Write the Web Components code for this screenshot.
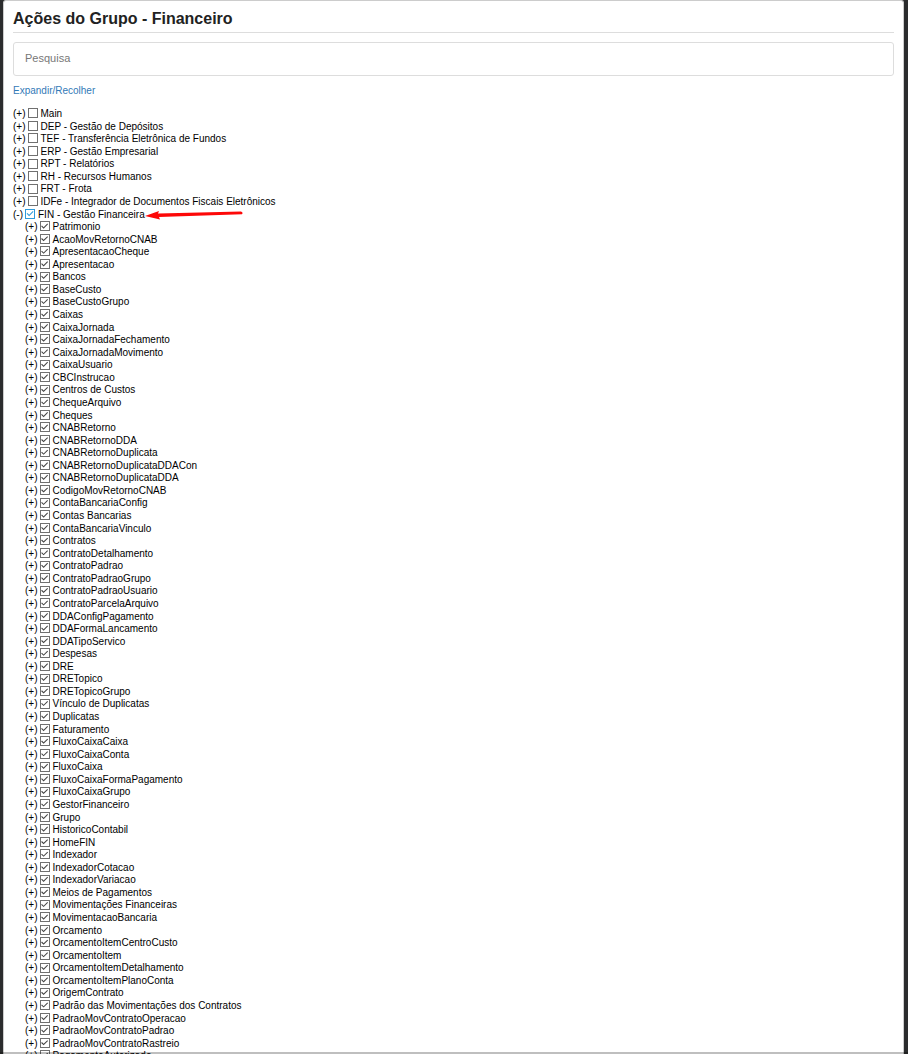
<!DOCTYPE html>
<html lang="pt-BR">
<head>
<meta charset="utf-8">
<title>Ações do Grupo - Financeiro</title>
<style>
  html {
    height: 100%;
  }

  body {
    margin: 0;
    height: 100%;
    overflow: hidden;
    background: #2b2c2d;
    font-family: "Liberation Sans", Arial, sans-serif;
  }
</style>
</head>
<body>
<painel-acoes titulo="Ações do Grupo - Financeiro">
  <campo-pesquisa texto="Pesquisa"></campo-pesquisa>
  <arvore-acoes></arvore-acoes>
</painel-acoes>

<script>
const MODULOS = [
  "Main",
  "DEP - Gestão de Depósitos",
  "TEF - Transferência Eletrônica de Fundos",
  "ERP - Gestão Empresarial",
  "RPT - Relatórios",
  "RH - Recursos Humanos",
  "FRT - Frota",
  "IDFe - Integrador de Documentos Fiscais Eletrônicos",
];

const ACOES_FIN = [
  "Patrimonio",
  "AcaoMovRetornoCNAB",
  "ApresentacaoCheque",
  "Apresentacao",
  "Bancos",
  "BaseCusto",
  "BaseCustoGrupo",
  "Caixas",
  "CaixaJornada",
  "CaixaJornadaFechamento",
  "CaixaJornadaMovimento",
  "CaixaUsuario",
  "CBCInstrucao",
  "Centros de Custos",
  "ChequeArquivo",
  "Cheques",
  "CNABRetorno",
  "CNABRetornoDDA",
  "CNABRetornoDuplicata",
  "CNABRetornoDuplicataDDACon",
  "CNABRetornoDuplicataDDA",
  "CodigoMovRetornoCNAB",
  "ContaBancariaConfig",
  "Contas Bancarias",
  "ContaBancariaVinculo",
  "Contratos",
  "ContratoDetalhamento",
  "ContratoPadrao",
  "ContratoPadraoGrupo",
  "ContratoPadraoUsuario",
  "ContratoParcelaArquivo",
  "DDAConfigPagamento",
  "DDAFormaLancamento",
  "DDATipoServico",
  "Despesas",
  "DRE",
  "DRETopico",
  "DRETopicoGrupo",
  "Vínculo de Duplicatas",
  "Duplicatas",
  "Faturamento",
  "FluxoCaixaCaixa",
  "FluxoCaixaConta",
  "FluxoCaixa",
  "FluxoCaixaFormaPagamento",
  "FluxoCaixaGrupo",
  "GestorFinanceiro",
  "Grupo",
  "HistoricoContabil",
  "HomeFIN",
  "Indexador",
  "IndexadorCotacao",
  "IndexadorVariacao",
  "Meios de Pagamentos",
  "Movimentações Financeiras",
  "MovimentacaoBancaria",
  "Orcamento",
  "OrcamentoItemCentroCusto",
  "OrcamentoItem",
  "OrcamentoItemDetalhamento",
  "OrcamentoItemPlanoConta",
  "OrigemContrato",
  "Padrão das Movimentações dos Contratos",
  "PadraoMovContratoOperacao",
  "PadraoMovContratoPadrao",
  "PadraoMovContratoRastreio",
  "PagamentoAutorizado",
];

class PainelAcoes extends HTMLElement {
  constructor() {
    super();
    this.attachShadow({ mode: "open" });
  }

  connectedCallback() {
    this.shadowRoot.innerHTML = `
      <style>
        :host {
          display: block;
          position: relative;
          box-sizing: border-box;
          height: 100%;
          padding: 0 4px 0 3px;
          overflow: hidden;
        }

        .painel {
          box-sizing: border-box;
          min-height: 100%;
          padding: 8px 9px;
          background: #fff;
          border: 1px solid #ccc;
          border-bottom: none;
          border-radius: 3px 3px 0 0;
        }

        h1 {
          margin: 0 0 9px;
          padding-bottom: 4px;
          border-bottom: 1px solid #ddd;
          color: #222;
          font-size: 16px;
          line-height: 19px;
        }

        .sombra {
          position: absolute;
          inset: auto 0 0 0;
          height: 2px;
          background: rgba(0, 0, 0, 0.25);
        }
      </style>

      <main class="painel">
        <h1></h1>
        <slot></slot>
      </main>
      <div class="sombra"></div>
    `;
    this.shadowRoot.querySelector("h1").textContent = this.getAttribute("titulo");
  }
}

class CampoPesquisa extends HTMLElement {
  constructor() {
    super();
    this.attachShadow({ mode: "open" });
  }

  connectedCallback() {
    const texto = this.getAttribute("texto") || "";

    this.shadowRoot.innerHTML = `
      <style>
        :host {
          display: block;
          margin-bottom: 8px;
        }

        input {
          display: block;
          box-sizing: border-box;
          width: 100%;
          height: 34px;
          padding: 0 11px 2px;
          border: 1px solid #ddd;
          border-radius: 3px;
          background: #fff;
          color: #333;
          font: 11px "Liberation Sans", Arial, sans-serif;
          outline: none;
        }

        input::placeholder {
          color: #777;
          opacity: 1;
        }
      </style>
      <input type="text" placeholder="${texto}" aria-label="${texto}">
    `;

    this.shadowRoot.querySelector("input").addEventListener("input", (e) => {
      this.dispatchEvent(
        new CustomEvent("pesquisar", { detail: e.target.value, bubbles: true }),
      );
    });
  }
}

class NoAcao extends HTMLElement {
  constructor() {
    super();
    this.attachShadow({ mode: "open" });
  }

  connectedCallback() {
    const aberto = this.hasAttribute("aberto");

    this.shadowRoot.innerHTML = `
      <style>
        :host {
          display: block;
        }

        :host([hidden]) {
          display: none;
        }

        .linha {
          display: flex;
          align-items: center;
          height: 1lh;
        }

        button {
          padding: 0;
          border: none;
          background: none;
          color: inherit;
          font: inherit;
          cursor: pointer;
        }

        label {
          display: flex;
          align-items: center;
          gap: 3px;
          margin-left: 2px;
          white-space: nowrap;
        }

        input {
          appearance: none;
          display: grid;
          place-items: center;
          box-sizing: border-box;
          width: 10px;
          height: 10px;
          margin: 0 0 2px;
          border: 1px solid #707070;
          background: #fff;
        }

        input:checked::before {
          content: "";
          width: 8px;
          height: 8px;
          background: #444;
          clip-path: polygon(8% 50%, 18% 40%, 39% 62%, 85% 16%, 94% 25%, 39% 80%);
        }

        :host([foco]) input {
          border-color: #2e9bdc;
        }

        :host([foco]) input:checked::before {
          background: #2e9bdc;
        }

        .seta {
          width: 98px;
          height: 10px;
        }

        .filhos {
          padding-left: 12px;
        }
      </style>

      <div class="linha">
        <button type="button" aria-label="Expandir ou recolher"></button>
        <label>
          <input type="checkbox">
          <span class="nome"></span>
        </label>
      </div>
      <div class="filhos"><slot></slot></div>
    `;

    const raiz = this.shadowRoot;
    const botao = raiz.querySelector("button");
    const check = raiz.querySelector("input");

    raiz.querySelector(".nome").textContent = this.getAttribute("nome");
    check.checked = this.hasAttribute("marcado");
    this.alternar(aberto);

    if (this.hasAttribute("foco")) {
      raiz.querySelector(".linha").insertAdjacentHTML(
        "beforeend",
        `<svg class="seta" viewBox="0 0 98 10" aria-hidden="true">
          <path d="M0 6 L14 1 L13 3.500 L96 1.500 Q98.500 2.500 97 4.200 L14 7 L15 9.500 Z" fill="#fd0808"/>
        </svg>`,
      );
    }

    botao.addEventListener("click", () => {
      this.alternar(!this.hasAttribute("aberto"));
    });

    check.addEventListener("change", () => {
      this.querySelectorAll("no-acao").forEach((no) => no.marcar(check.checked));
    });
  }

  alternar(aberto) {
    this.toggleAttribute("aberto", aberto);
    this.shadowRoot.querySelector("button").textContent = aberto ? "(-)" : "(+)";
    this.shadowRoot.querySelector(".filhos").hidden = !aberto;
  }

  marcar(valor) {
    this.shadowRoot.querySelector("input").checked = valor;
  }
}

class ArvoreAcoes extends HTMLElement {
  constructor() {
    super();
    this.attachShadow({ mode: "open" });
  }

  connectedCallback() {
    this.shadowRoot.innerHTML = `
      <style>
        :host {
          display: block;
          color: #000;
          font-size: 10px;
        }

        a {
          display: inline-block;
          color: #337ab7;
          line-height: 14px;
          text-decoration: none;
        }

        .arvore {
          margin-top: 10px;
          line-height: 1.257;
        }
      </style>

      <a href="#">Expandir/Recolher</a>
      <div class="arvore">
        ${MODULOS.map((nome) => `<no-acao nome="${nome}"></no-acao>`).join("")}
        <no-acao nome="FIN - Gestão Financeira" aberto marcado foco>
          ${ACOES_FIN.map((nome) => `<no-acao nome="${nome}" marcado></no-acao>`).join("")}
        </no-acao>
      </div>
    `;

    this.shadowRoot.querySelector("a").addEventListener("click", (e) => {
      e.preventDefault();
      const nos = [...this.shadowRoot.querySelectorAll(".arvore > no-acao")];
      const abrir = !nos.some((no) => no.hasAttribute("aberto"));
      nos.forEach((no) => no.alternar(abrir));
    });
  }

  filtrar(termo) {
    const busca = termo.toLowerCase();
    this.shadowRoot.querySelectorAll(".arvore > no-acao").forEach((no) => {
      const nomes = [no, ...no.children].map((n) => n.getAttribute("nome").toLowerCase());
      no.hidden = !nomes.some((n) => n.includes(busca));
    });
  }
}

customElements.define("painel-acoes", PainelAcoes);
customElements.define("campo-pesquisa", CampoPesquisa);
customElements.define("no-acao", NoAcao);
customElements.define("arvore-acoes", ArvoreAcoes);

document.addEventListener("pesquisar", (e) => {
  document.querySelector("arvore-acoes").filtrar(e.detail);
});
</script>
</body>
</html>
